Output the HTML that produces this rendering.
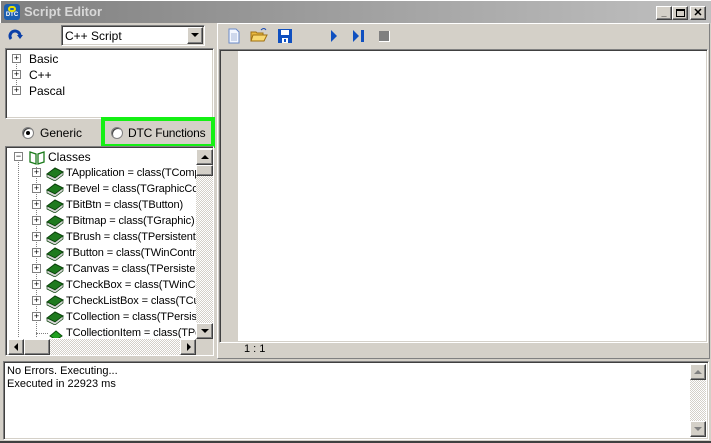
<!DOCTYPE html>
<html><head><style>
*{box-sizing:border-box;margin:0;padding:0}
body{width:711px;height:443px;overflow:hidden;background:#d4d0c8;font-family:"Liberation Sans",sans-serif;font-size:11px;color:#000;position:relative}
.a{position:absolute}
.sunk{border:1px solid;border-color:#808080 #fff #fff #808080;box-shadow:inset 1px 1px 0 #404040,inset -1px -1px 0 #d4d0c8}
.btn{background:#d4d0c8;border:1px solid;border-color:#fff #404040 #404040 #fff;box-shadow:inset -1px -1px 0 #808080}
.hatch{background:repeating-conic-gradient(#fff 0 25%,#d4d0c8 0 50%) 0 0/2px 2px}
.row{position:absolute;left:0;height:16px;line-height:16px;white-space:nowrap}
.pl{position:absolute;width:9px;height:9px;border:1px solid #808080;background:#fff;font-size:9px;line-height:7px;text-align:center;color:#000}
</style></head><body>
<div class="a" style="left:0;top:0;width:711px;height:23px;border-top:1px solid #fff;border-left:1px solid #fff;background:linear-gradient(90deg,#808080,#c0c0c0)"></div>
<div class="a" style="left:4px;top:4px;width:16px;height:16px;background:#1c5fb0;border-radius:3px;color:#fff;font-size:6px;font-weight:bold;text-align:center;line-height:22px">DTC<div class="a" style="left:4px;top:2px;width:8px;height:6px;border:2px solid #e8e000;border-radius:4px"></div></div>
<div class="a" style="left:24px;top:4px;color:#d8d8d8;font-weight:bold;font-size:13px">Script Editor</div>
<div class="a btn" style="left:656px;top:6px;width:16px;height:14px;font-size:9px;font-weight:bold;text-align:center;line-height:12px">_</div>
<div class="a btn" style="left:672px;top:6px;width:16px;height:14px"><div class="a" style="left:3px;top:2px;width:9px;height:8px;border:1px solid #000;border-top-width:2px"></div></div>
<div class="a btn" style="left:690px;top:6px;width:16px;height:14px;font-size:11px;font-weight:bold;text-align:center;line-height:12px">✕</div>

<svg class="a" style="left:8px;top:29px" width="16" height="14"><path d="M3 10 A5 5 0 1 1 12 7" fill="none" stroke="#0a3fa8" stroke-width="3"/><path d="M9 6 L15 6 L12 10Z" fill="#0a3fa8"/></svg>
<div class="a sunk" style="left:61px;top:25px;width:144px;height:21px;background:#fff"><span class="a" style="left:3px;top:3px;font-size:12px">C++ Script</span>
<div class="a btn" style="left:125px;top:1px;width:16px;height:17px"><div class="a" style="left:3px;top:5px;border:4px solid transparent;border-top:4px solid #000;border-bottom:0"></div></div></div>

<div class="a sunk" style="left:5px;top:48px;width:209px;height:71px;background:#fff">
<div class="a" style="left:10px;top:12px;height:34px;border-left:1px dotted #808080"></div>
<div class="row" style="left:6px;top:2px"><div class="pl" style="left:0;top:3px">+</div><span style="margin-left:17px;font-size:12px">Basic</span></div>
<div class="row" style="left:6px;top:18px"><div class="pl" style="left:0;top:3px">+</div><span style="margin-left:17px;font-size:12px">C++</span></div>
<div class="row" style="left:6px;top:34px"><div class="pl" style="left:0;top:3px">+</div><span style="margin-left:17px;font-size:12px">Pascal</span></div>
</div>

<div class="a" style="left:22px;top:127px;width:12px;height:12px;border-radius:50%;background:#fff;border:1px solid #808080;box-shadow:inset 1px 1px 0 #404040"><div class="a" style="left:3px;top:3px;width:4px;height:4px;background:#000;border-radius:50%"></div></div>
<div class="a" style="left:40px;top:126px;font-size:12px">Generic</div>
<div class="a" style="left:101px;top:117px;width:114px;height:31px;border:4px solid #14f014"></div>
<div class="a" style="left:111px;top:127px;width:12px;height:12px;border-radius:50%;background:#fff;border:1px solid #808080;box-shadow:inset 1px 1px 0 #404040"></div>
<div class="a" style="left:128px;top:126px;font-size:12px;letter-spacing:-0.2px">DTC Functions</div>

<div class="a sunk" style="left:5px;top:146px;width:209px;height:210px;background:#fff;overflow:hidden">
<div class="a" style="left:2px;top:2px;width:188px;height:189px;overflow:hidden">
<div class="a" style="left:10px;top:10px;height:200px;border-left:1px dotted #808080"></div>
<div class="a" style="left:28px;top:18px;height:170px;border-left:1px dotted #808080"></div>
<div class="row" style="top:0"><div class="pl" style="left:6px;top:3px">−</div>
<svg class="a" style="left:20px;top:0" width="18" height="16"><path d="M2 3 L8 5 L8 15 L2 13Z M16 3 L10 5 L10 15 L16 13Z" fill="#fff" stroke="#1a7a1a" stroke-width="1.3"/></svg>
<span class="a" style="left:40px;font-size:12px">Classes</span></div>
<div id="rows"></div>
</div>
<div class="a hatch" style="left:190px;top:2px;width:17px;height:190px"></div>
<div class="a btn" style="left:190px;top:2px;width:17px;height:16px"><div class="a" style="left:4px;top:5px;border:4px solid transparent;border-bottom:4px solid #000;border-top:0"></div></div>
<div class="a btn" style="left:190px;top:18px;width:17px;height:11px"></div>
<div class="a btn" style="left:190px;top:176px;width:17px;height:16px"><div class="a" style="left:4px;top:5px;border:4px solid transparent;border-top:4px solid #000;border-bottom:0"></div></div>
<div class="a hatch" style="left:2px;top:192px;width:188px;height:16px"></div>
<div class="a btn" style="left:2px;top:192px;width:16px;height:16px"><div class="a" style="left:5px;top:3px;border:4px solid transparent;border-right:4px solid #000;border-left:0"></div></div>
<div class="a btn" style="left:18px;top:192px;width:26px;height:16px"></div>
<div class="a btn" style="left:174px;top:192px;width:16px;height:16px"><div class="a" style="left:6px;top:3px;border:4px solid transparent;border-left:4px solid #000;border-right:0"></div></div>
<div class="a" style="left:190px;top:192px;width:17px;height:16px;background:#d4d0c8"></div>
</div>

<div class="a" style="left:217px;top:23px;width:493px;height:336px;border:1px solid;border-color:#fff #808080 #808080 #fff"></div>
<svg class="a" style="left:226px;top:28px" width="16" height="16"><path d="M3 1 H10 L13 4 V15 H3Z" fill="#f4f8ff" stroke="#6a8ac8"/><path d="M5 6H11M5 8H11M5 10H11M5 12H11" stroke="#a8b8d8"/></svg>
<svg class="a" style="left:250px;top:27px" width="18" height="16"><path d="M1 5 H6 L7 6 H13 V14 H1Z" fill="#e8b840" stroke="#a07010"/><path d="M3 8 H17 L14 14 H1Z" fill="#f8d870" stroke="#a07010"/><path d="M11 3 Q14 0 16 3" fill="none" stroke="#1848b0"/></svg>
<svg class="a" style="left:277px;top:28px" width="16" height="16"><rect x="1" y="1" width="14" height="14" fill="#1050c0"/><rect x="4" y="2" width="8" height="5" fill="#fff"/><rect x="5" y="10" width="6" height="5" fill="#fff"/><rect x="7" y="11" width="2" height="3" fill="#1050c0"/></svg>
<svg class="a" style="left:330px;top:30px" width="8" height="12"><path d="M1 0 L7 6 L1 12Z" fill="#1050c0"/></svg>
<svg class="a" style="left:352px;top:30px" width="14" height="12"><path d="M1 0 L7 6 L1 12Z" fill="#1050c0"/><rect x="9" y="0" width="3" height="12" fill="#1050c0"/></svg>
<div class="a" style="left:379px;top:31px;width:11px;height:11px;background:#808080;border-right:1px solid #fff;border-bottom:1px solid #fff"></div>
<div class="a sunk" style="left:219px;top:49px;width:489px;height:294px;background:#fff"><div class="a" style="left:1px;top:1px;width:17px;height:290px;background:#d4d0c8"></div></div>
<div class="a" style="left:244px;top:343px;font-size:11px">1 : 1</div>

<div class="a sunk" style="left:3px;top:361px;width:706px;height:79px;background:#fff">
<div class="a" style="left:3px;top:3px;line-height:13px;font-size:11px">No Errors. Executing...<br>Executed in 22923 ms</div>
<div class="a hatch" style="left:686px;top:2px;width:16px;height:73px"></div>
<div class="a btn" style="left:686px;top:2px;width:16px;height:16px"><div class="a" style="left:3px;top:5px;border:4px solid transparent;border-bottom:4px solid #808080;border-top:0"></div></div>
<div class="a btn" style="left:686px;top:59px;width:16px;height:16px"><div class="a" style="left:3px;top:5px;border:4px solid transparent;border-top:4px solid #808080;border-bottom:0"></div></div>
</div>
<div class="a" style="left:0;top:441px;width:711px;height:2px;background:#404040"></div>

<script>
var names=["TApplication = class(TComponent)","TBevel = class(TGraphicControl)","TBitBtn = class(TButton)","TBitmap = class(TGraphic)","TBrush = class(TPersistent)","TButton = class(TWinControl)","TCanvas = class(TPersistent)","TCheckBox = class(TWinControl)","TCheckListBox = class(TCustomListBox)","TCollection = class(TPersistent)","TCollectionItem = class(TPersistent)"];
var h="";
names.forEach(function(n,i){var t=16*(i+1);var last=i==names.length-1;
h+='<div class="row" style="top:'+t+'px;width:300px">'+(last?'<div class="a" style="left:28px;top:8px;width:12px;border-top:1px dotted #808080"></div>':'<div class="pl" style="left:24px;top:3px">+</div>')+
(last?'<svg class="a" style="left:40px;top:2px" width="16" height="14"><path d="M2 9 L8 4 L14 9 L8 13Z" fill="#20a020" stroke="#0a500a"/></svg>':'<svg class="a" style="left:38px;top:0" width="18" height="16"><path d="M1 9 L9 3 L17 7 L9 13Z" fill="#1e7a1e" stroke="#0a400a"/><path d="M1 9 V12 L9 16 L17 10 V7 L9 13Z" fill="#d8d8d8" stroke="#0a400a" stroke-width=".7"/></svg>')+
'<span class="a" style="left:58px;font-size:11px;letter-spacing:-0.1px">'+n+'</span></div>';});
document.getElementById("rows").outerHTML=h;
</script>
</body></html>
